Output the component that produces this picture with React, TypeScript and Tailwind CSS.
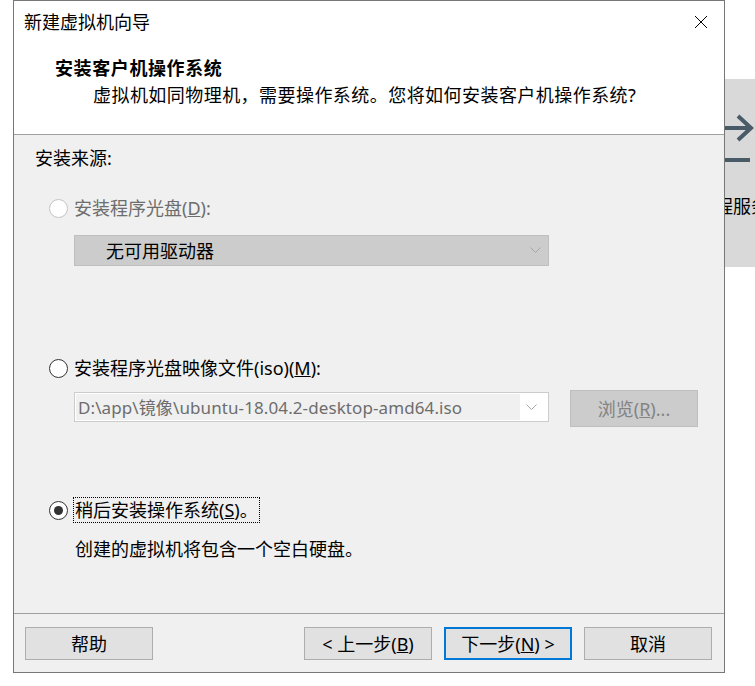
import type { ReactNode } from 'react'

function Radio({ checked, disabled }: { checked?: boolean; disabled?: boolean }) {
  return (
    <span
      className={`flex h-[19px] w-[19px] shrink-0 items-center justify-center rounded-full border bg-white ${
        disabled ? 'border-[#c4c4c4]' : 'border-[#333333]'
      }`}
    >
      {checked && <span className="h-[9px] w-[9px] rounded-full bg-[#333333]" />}
    </span>
  )
}

function Chevron({ color }: { color: string }) {
  return (
    <svg width="11" height="7" viewBox="0 0 11 7" className="shrink-0">
      <polyline points="0.5,0.5 5.5,5.5 10.5,0.5" fill="none" stroke={color} strokeWidth="1" />
    </svg>
  )
}

function Button({ children, primary }: { children: ReactNode; primary?: boolean }) {
  return (
    <button
      className={`flex h-[33px] w-[128px] items-center justify-center bg-[#e1e1e1] text-[18px] leading-none text-black ${
        primary ? 'border-2 border-[#0078d7]' : 'border border-[#adadad]'
      }`}
    >
      {children}
    </button>
  )
}

export default function App() {
  return (
    <div className="relative h-[686px] w-[755px] overflow-hidden bg-white text-black [font-family:'Noto_Sans','Noto_Sans_CJK_SC',sans-serif]">
      {/* home tile behind the dialog */}
      <div className="absolute left-[640px] top-[79px] h-[188px] w-[140px] bg-[#d9d9d9]">
        <svg width="140" height="100" viewBox="0 0 140 100" className="absolute left-0 top-0">
          <line x1="60" y1="49" x2="110" y2="49" stroke="#4a5b68" strokeWidth="4" />
          <polyline points="98,37 111,49 98,61" fill="none" stroke="#4a5b68" strokeWidth="4" />
          <rect x="60" y="79" width="50" height="4" fill="#4a5b68" />
        </svg>
        <div className="absolute left-[21px] top-[118px] text-[18px] leading-none whitespace-nowrap">连接远程服务器</div>
      </div>

      {/* wizard dialog */}
      <div className="absolute left-[13px] top-0 flex h-[673px] w-[712px] flex-col border border-[#777777] bg-[#f0f0f0] text-[18px] leading-none">
        <div className="flex h-[134px] shrink-0 flex-col border-b border-[#a0a0a0] bg-white">
          <div className="flex h-[42px] items-center justify-between pl-[10px] pr-[16px]">
            <span>新建虚拟机向导</span>
            <svg width="14" height="14" viewBox="0 0 14 14">
              <line x1="1" y1="1" x2="13" y2="13" stroke="#000" strokeWidth="1" />
              <line x1="13" y1="1" x2="1" y2="13" stroke="#000" strokeWidth="1" />
            </svg>
          </div>
          <div className="mt-[13px] flex h-[24px] items-center pl-[41px] font-bold tracking-[0.6px]">安装客户机操作系统</div>
          <div className="mt-[3px] flex h-[24px] items-center pl-[79px] tracking-[0.45px]">
            虚拟机如同物理机，需要操作系统。您将如何安装客户机操作系统?
          </div>
        </div>

        <div className="flex h-[478px] shrink-0 flex-col pl-[21px]">
          <div className="mt-[11px] flex h-[24px] items-center">安装来源:</div>

          <div className="mt-[26px] flex h-[24px] items-center gap-[6px] pl-[14px] text-[#6d6d6d]">
            <Radio disabled />
            <span>
              安装程序光盘(<span className="underline">D</span>):
            </span>
          </div>

          <div className="ml-[39px] mt-[15px] flex h-[31px] w-[475px] items-center justify-between border border-[#bfbfbf] bg-[#cccccc] pl-[31px] pr-[7px]">
            <span>无可用驱动器</span>
            <Chevron color="#a6a6a6" />
          </div>

          <div className="mt-[90px] flex h-[24px] items-center gap-[6px] pl-[14px]">
            <Radio />
            <span>
              安装程序光盘映像文件(iso)(<span className="underline">M</span>):
            </span>
          </div>

          <div className="ml-[39px] mt-[10px] flex items-start gap-[21px]">
            <div className="mt-[2px] flex h-[30px] w-[475px] items-center border border-[#cccccc] bg-white p-[1px]">
              <div className="flex h-full w-[444px] items-center bg-[#f0f0f0] pl-[2px] text-[17px] tracking-[0.1px] text-[#6d6d6d]">
                {'D:\\app\\镜像\\ubuntu-18.04.2-desktop-amd64.iso'}
              </div>
              <div className="flex flex-1 items-center justify-end pr-[10px]">
                <Chevron color="#a6a6a6" />
              </div>
            </div>
            <div className="flex h-[37px] w-[128px] items-center justify-center border border-[#bfbfbf] bg-[#cccccc] text-[#838383]">
              浏览(<span className="underline">R</span>)...
            </div>
          </div>

          <div className="mt-[71px] flex h-[24px] items-center gap-[5px] pl-[14px]">
            <Radio checked />
            <span className="flex h-[26px] items-center border border-dotted border-black px-[1px]">
              稍后安装操作系统(<span className="underline">S</span>)。
            </span>
          </div>

          <div className="mt-[15px] flex h-[24px] items-center pl-[40px]">创建的虚拟机将包含一个空白硬盘。</div>
        </div>

        <div className="flex flex-1 items-start justify-between border-t border-[#a0a0a0] pl-[11px] pr-[12px] pt-[13px]">
          <Button>帮助</Button>
          <div className="flex gap-[12px]">
            <Button>
              &lt; 上一步(<span className="underline">B</span>)
            </Button>
            <Button primary>
              下一步(<span className="underline">N</span>) &gt;
            </Button>
            <Button>取消</Button>
          </div>
        </div>
      </div>
    </div>
  )
}
